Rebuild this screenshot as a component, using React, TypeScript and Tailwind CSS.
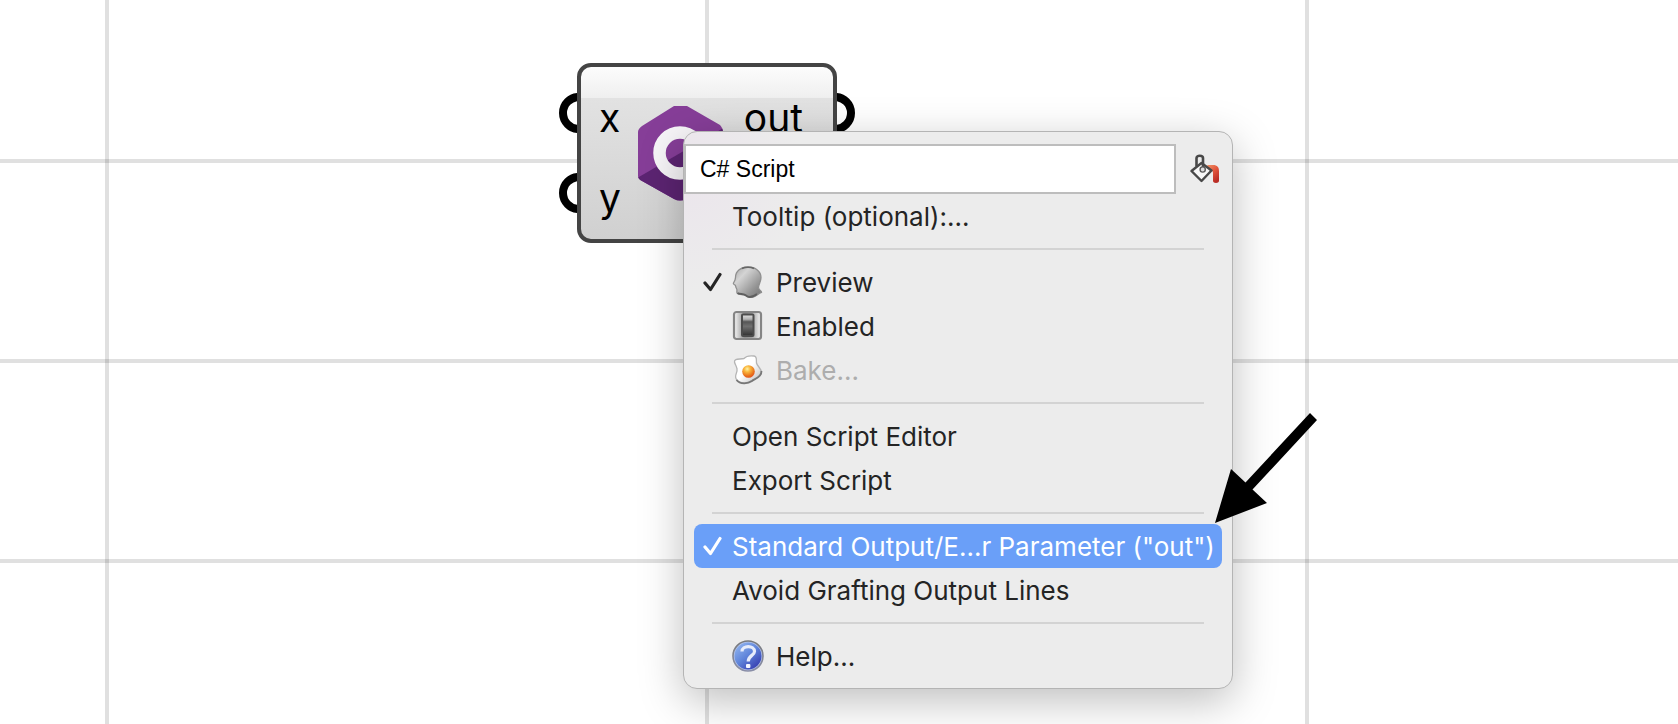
import type { ReactNode } from "react";

function CheckMark() {
  return (
    <svg viewBox="0 0 20 20" className="h-5 w-5" fill="none" stroke="currentColor" strokeWidth="3.200" strokeLinecap="round" strokeLinejoin="round" aria-hidden="true">
      <path d="M2 11 L7.500 17.500 L17 2.500" />
    </svg>
  );
}

function HeadIcon() {
  return (
    <svg viewBox="0 0 32 32" className="h-8 w-8" aria-hidden="true">
      <defs>
        <linearGradient id="head" x1="0" y1="0" x2="1" y2="1">
          <stop offset="0" stopColor="#a6a6a6" />
          <stop offset="0.3" stopColor="#d4d4d4" />
          <stop offset="0.7" stopColor="#969696" />
          <stop offset="1" stopColor="#6f6f6f" />
        </linearGradient>
      </defs>
      <path d="M3.500 11.500 C3.500 5 9 1 16 1 C23.500 1 29 5.500 29 11.500 C29 16 26.500 18.500 26.500 21.500 C27 24.500 30 25 29.500 26.500 C26 27.500 24 31 19.500 31.500 C15 32 14.500 28.500 12 28.500 C9 28.800 6 29 5 27 C4.500 25 5.500 24 4.500 22.500 C3.500 21 4 20 3 19 C2 18.500 1 18 1.500 17 C2.500 15.500 3.500 14 3.500 11.500 Z" fill="url(#head)" stroke="#8f8f8f" strokeWidth="1.300" />
      <path d="M10 2.500 C13 0.800 19 0.800 22 2.500" fill="none" stroke="#666" strokeWidth="1.500" />
      <path d="M5.500 27 C8 28.500 12 27.500 14 29.500 C16 31.500 20 31.500 25 28" fill="none" stroke="#5f5f5f" strokeWidth="1.800" />
    </svg>
  );
}

function SwitchIcon() {
  return (
    <svg viewBox="0 0 32 32" className="h-8 w-8" aria-hidden="true">
      <defs>
        <linearGradient id="plate" x1="0" y1="0" x2="1" y2="0">
          <stop offset="0" stopColor="#f8f8f8" />
          <stop offset="0.4" stopColor="#8f8f8f" />
          <stop offset="0.65" stopColor="#9f9f9f" />
          <stop offset="1" stopColor="#f6f6f6" />
        </linearGradient>
        <linearGradient id="toggle" x1="0" y1="0" x2="0" y2="1">
          <stop offset="0" stopColor="#e4e4e4" />
          <stop offset="0.22" stopColor="#b0b0b0" />
          <stop offset="0.34" stopColor="#555" />
          <stop offset="0.55" stopColor="#707070" />
          <stop offset="1" stopColor="#303030" />
        </linearGradient>
      </defs>
      <rect x="2" y="2" width="27" height="27" rx="2.500" fill="url(#plate)" stroke="#858585" strokeWidth="2.200" />
      <rect x="10" y="4.500" width="11.500" height="21.500" rx="1" fill="url(#toggle)" stroke="#4c4c4c" strokeWidth="2" />
    </svg>
  );
}

function EggIcon() {
  return (
    <svg viewBox="0 0 32 32" className="h-8 w-8" aria-hidden="true">
      <defs>
        <linearGradient id="white" x1="0" y1="0" x2="1" y2="1">
          <stop offset="0.5" stopColor="#ffffff" />
          <stop offset="1" stopColor="#b5b5b5" />
        </linearGradient>
        <radialGradient id="yolk" cx="0.4" cy="0.3" r="0.8">
          <stop offset="0" stopColor="#fff3a8" />
          <stop offset="0.3" stopColor="#f9b83e" />
          <stop offset="0.7" stopColor="#e8701c" />
          <stop offset="1" stopColor="#e0401a" />
        </radialGradient>
      </defs>
      <path d="M2.500 8 C2 4.500 7 5.500 12 4.500 C14.500 1.500 18 1.500 22 2 C25.500 2.500 24 6 24.500 9 C25.500 13 29.500 14 29.500 19 C28.500 24 23 24.500 20 26.500 C16 29.500 8 30 5 26 C1 22 6 19 5 15 C4.500 12 3 10.500 2.500 8 Z" fill="url(#white)" stroke="#b4b4b4" strokeWidth="1.300" />
      <path d="M29.500 17 C29.500 23.500 23 24.500 20 27 C16 30 8 30.500 4.500 26" fill="none" stroke="#777" strokeWidth="1.800" />
      <circle cx="16.500" cy="17.500" r="6.300" fill="url(#yolk)" />
    </svg>
  );
}

function HelpIcon() {
  return (
    <svg viewBox="0 0 32 32" className="h-8 w-8" aria-hidden="true">
      <defs>
        <linearGradient id="ball" x1="0.1" y1="0.1" x2="0.8" y2="0.9">
          <stop offset="0" stopColor="#8db1ee" />
          <stop offset="0.5" stopColor="#5f84da" />
          <stop offset="1" stopColor="#3a44b4" />
        </linearGradient>
        <linearGradient id="rim" x1="0" y1="0" x2="0" y2="1">
          <stop offset="0" stopColor="#77797c" />
          <stop offset="1" stopColor="#8a8fa8" />
        </linearGradient>
      </defs>
      <circle cx="16" cy="16" r="15" fill="#b5c4ea" stroke="url(#rim)" strokeWidth="1.600" />
      <circle cx="16" cy="16" r="13.500" fill="url(#ball)" />
      <path d="M10 11.500 C10 5 22.500 5 22.500 11.500 C22.500 15.500 16.200 15.500 16.200 21.500" fill="none" stroke="#e6ecfb" strokeWidth="3.200" />
      <rect x="14" y="24" width="4.400" height="4" rx="1" fill="#f3f6ff" />
    </svg>
  );
}

function PaintIcon() {
  return (
    <svg viewBox="0 0 30 30" className="h-[30px] w-[30px]" aria-hidden="true">
      <defs>
        <linearGradient id="pour" x1="0" y1="0" x2="0.6" y2="1">
          <stop offset="0" stopColor="#f09468" />
          <stop offset="0.5" stopColor="#e2553c" />
          <stop offset="1" stopColor="#b92c25" />
        </linearGradient>
      </defs>
      <path d="M17 11 H23 C27.500 11 29 13.500 29 17 V27 C29 29.500 23 29.500 23 27 V19 C23 17 22 16.500 20 16.500 Z" fill="url(#pour)" />
      <path d="M1.500 17 L11.500 9 L21.500 16.500 L11.500 27 Z" fill="#f7f7f7" stroke="#484848" strokeWidth="2.400" strokeLinejoin="round" />
      <path d="M6.500 12.500 V4 C6.500 1 13 1 13 4 V13" fill="none" stroke="#484848" strokeWidth="2.600" />
      <circle cx="12.700" cy="15.500" r="2.600" fill="#ddd" stroke="#5a5a5a" strokeWidth="1.400" />
    </svg>
  );
}

function CSharpLogo() {
  return (
    <svg viewBox="0 0 88 96" className="h-24 w-[88px] shrink-0" aria-hidden="true">
      <defs>
        <clipPath id="hexagon">
          <path d="M37 0 H50 L83 19 Q86 22 86 27 V67 Q86 72 83 75 L49 93 Q43 96 37 93 L5 75 Q1 73 1 70 V26 Q1 23 5 20 Z" />
        </clipPath>
      </defs>
      <g clipPath="url(#hexagon)">
        <rect width="88" height="96" fill="#863e98" />
        <path d="M0 72 L88 21 V96 H0 Z" fill="#5c2472" />
      </g>
      <circle cx="43" cy="47" r="20.500" fill="none" stroke="#f7f5f8" strokeWidth="12.500" />
    </svg>
  );
}

function Grip({ side, className }: { side: "left" | "right"; className: string }) {
  return (
    <svg viewBox="0 0 18 40" className={`absolute h-10 w-[18px] ${className}`} fill="none" stroke="#000" strokeWidth="8" aria-hidden="true">
      <circle cx={side === "left" ? 20 : -2} cy="20" r="16" />
    </svg>
  );
}

function ScriptNode() {
  return (
    <section
      aria-label="Script component"
      className="absolute top-[63px] left-[577px] flex h-[180px] w-[260px] rounded-[14px] border-4 border-[#444] bg-[linear-gradient(#fcfcfc_0px,#efefef_31px,#e2e2e2_31px,#d0d0d0_100%)] pr-[30px] pl-[18px] font-[Inter,sans-serif] text-[39px] text-black"
    >
      <Grip side="left" className="top-[26px] -left-[22px]" />
      <Grip side="left" className="top-[106px] -left-[22px]" />
      <Grip side="right" className="top-[26px] -right-[22px]" />
      <div className="w-[38px] shrink-0 pt-[11px]">
        <div className="flex h-20 items-center">x</div>
        <div className="flex h-20 items-center">y</div>
      </div>
      <div className="pt-[39px]">
        <CSharpLogo />
      </div>
      <div className="ml-auto pt-[11px]">
        <div className="flex h-20 items-center">out</div>
      </div>
    </section>
  );
}

type ItemProps = {
  children: ReactNode;
  icon?: ReactNode;
  checked?: boolean;
  active?: boolean;
  disabled?: boolean;
};

function Item({ children, icon, checked, active, disabled }: ItemProps) {
  const tone = active ? "bg-[#6a9ff8] text-white" : disabled ? "text-[#adadad]" : "text-[#242424]";
  return (
    <button
      type="button"
      role={checked === undefined ? "menuitem" : "menuitemcheckbox"}
      aria-checked={checked}
      disabled={disabled}
      className={`flex h-11 w-full items-center rounded-lg pl-[9px] text-left whitespace-nowrap ${tone}`}
    >
      <span className="w-[29px] shrink-0">{checked && <CheckMark />}</span>
      {icon && <span className="w-11 shrink-0">{icon}</span>}
      <span className="pt-0.5">{children}</span>
    </button>
  );
}

function Separator() {
  return <hr className="mx-[18px] my-2.5 border-t-2 border-[#d3d3d3]" />;
}

function ContextMenu() {
  return (
    <div
      role="menu"
      aria-label="Component menu"
      className="absolute top-[131px] left-[683px] w-[550px] rounded-[14px] border border-[#b4b4b4] bg-[#ececec] bg-[radial-gradient(circle_at_0_40px,#ebe5ec_0px,#ececec_120px)] pt-3 pb-2.5 font-[Inter,sans-serif] text-[26px] leading-8 shadow-[0_12px_44px_rgba(0,0,0,0.26)]"
    >
      <div className="flex items-center">
        <input
          type="text"
          aria-label="Component name"
          defaultValue="C# Script"
          className="h-[50px] min-w-0 flex-1 border-2 border-[#bdbdbd] bg-white pl-3.5 font-['Liberation_Sans',Arial,sans-serif] text-[23px] text-black outline-none"
        />
        <button type="button" aria-label="Component colour" className="mr-3 ml-3.5">
          <PaintIcon />
        </button>
      </div>
      <div className="px-2.5">
        <Item>Tooltip (optional):...</Item>
        <Separator />
        <Item checked icon={<HeadIcon />}>Preview</Item>
        <Item icon={<SwitchIcon />}>Enabled</Item>
        <Item disabled icon={<EggIcon />}>Bake...</Item>
        <Separator />
        <Item>Open Script Editor</Item>
        <Item>Export Script</Item>
        <Separator />
        <Item checked active>Standard Output/E...r Parameter ("out")</Item>
        <Item>Avoid Grafting Output Lines</Item>
        <Separator />
        <Item icon={<HelpIcon />}>Help...</Item>
      </div>
    </div>
  );
}

function PointerArrow() {
  return (
    <svg viewBox="0 0 104 112" className="absolute top-[412px] left-[1214px] h-28 w-[104px]" aria-hidden="true">
      <path d="M1 111 L17 57 L31.500 70.500 L96 1 L103 8 L38.500 77.500 L53 91 Z" fill="#000" />
    </svg>
  );
}

export default function App() {
  return (
    <main className="relative h-screen min-h-[700px] w-full overflow-hidden bg-white bg-[linear-gradient(90deg,rgba(0,0,0,0.12)_4px,transparent_4px),linear-gradient(rgba(0,0,0,0.12)_4px,transparent_4px)] bg-[size:600px_100%,100%_200px] bg-[position:105px_0px,0px_159px]">
      <ScriptNode />
      <ContextMenu />
      <PointerArrow />
    </main>
  );
}
